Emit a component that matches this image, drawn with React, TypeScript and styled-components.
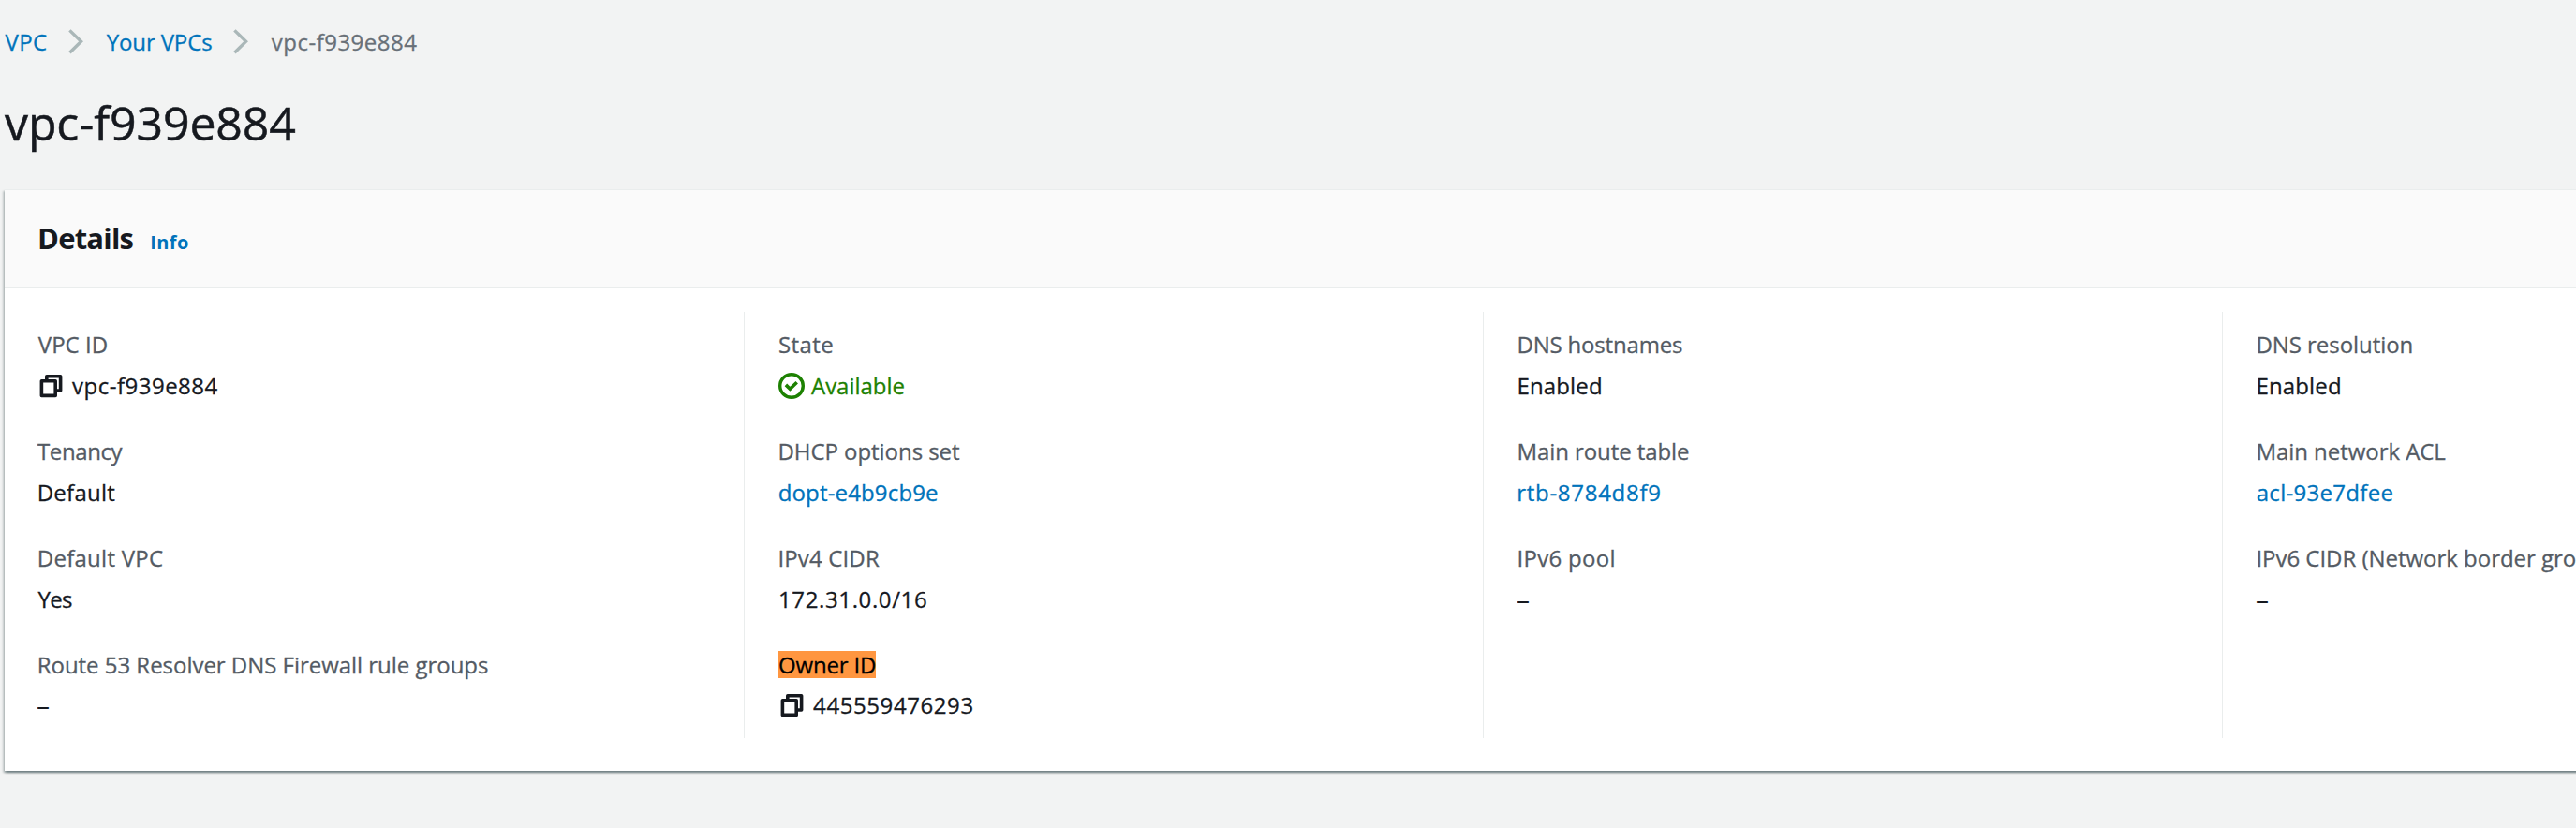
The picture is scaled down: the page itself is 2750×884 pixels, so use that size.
import React from 'react';
import styled, { createGlobalStyle } from 'styled-components';

const GlobalStyle = createGlobalStyle`
  body {
    margin: 0;
    background: #f2f3f3;
    color: #16191f;
    font-family: 'Open Sans', 'Noto Sans', sans-serif;
    font-size: 24px;
    line-height: 36px;
    -webkit-text-stroke: 0.3px currentColor;
  }
`;

const Page = styled.main`
  box-sizing: border-box;
  width: 100%;
  height: 884px;
  padding: 27px 0 0 5px;
  overflow: hidden;
  white-space: nowrap;
`;

const Breadcrumbs = styled.nav`
  display: flex;
  align-items: center;
  height: 36px;
  padding-left: 0.6px;
`;

const Crumb = styled.a<{ $current?: boolean; $spacing: number }>`
  color: ${(p) => (p.$current ? '#687078' : '#0073bb')};
  letter-spacing: ${(p) => p.$spacing}px;
`;

const ChevronIcon = styled.svg`
  flex: none;
  width: 16px;
  height: 27px;
  margin: 0 24.4px 1px 23px;
`;

const Title = styled.h1`
  margin: 38px 0 0;
  font-size: 50px;
  font-weight: 400;
  line-height: 60px;
  letter-spacing: -0.1px;
  -webkit-text-stroke-width: 0.5px;
`;

const Card = styled.section`
  width: 3156px;
  margin-top: 41px;
  background: #fff;
  border-top: 1px solid #eaeded;
  box-shadow:
    0 2px 2px 0 rgba(0, 28, 36, 0.34),
    2px 2px 2px 0 rgba(0, 28, 36, 0.16),
    -2px 2px 2px 0 rgba(0, 28, 36, 0.16);
`;

const CardHeader = styled.header`
  display: flex;
  align-items: baseline;
  box-sizing: border-box;
  height: 104px;
  padding: 31px 35px 0;
  background: #fafafa;
  border-bottom: 1px solid #eaeded;
  -webkit-text-stroke-width: 0;
`;

const CardTitle = styled.h2`
  margin: 0;
  font-size: 31px;
  font-weight: 700;
  line-height: 40px;
  letter-spacing: -0.79px;
`;

const InfoLink = styled.a`
  margin-left: 18px;
  color: #0073bb;
  font-size: 20px;
  font-weight: 700;
  letter-spacing: 0.4px;
`;

const Columns = styled.div`
  display: grid;
  grid-template-columns: repeat(4, 789px);
  padding: 26px 0 35px;
`;

const Column = styled.div`
  display: flex;
  flex-direction: column;
  gap: 34px;
  box-sizing: border-box;
  height: 455px;
  padding: 17px 0 0 36px;
  border-left: 1px solid #eaeded;

  &:first-child {
    padding-left: 35px;
    border-left: 0;
  }
`;

const Field = styled.div<{ $tight?: boolean }>`
  display: flex;
  flex-direction: column;
  align-items: flex-start;
  gap: ${(p) => (p.$tight ? 7 : 8)}px;
`;

const Label = styled.div<{ $spacing: number; $shift: number }>`
  height: 36px;
  margin-left: ${(p) => p.$shift}px;
  color: #545b64;
  letter-spacing: ${(p) => p.$spacing}px;
`;

const Mark = styled.mark`
  display: block;
  width: 104px;
  height: 29px;
  margin-top: 3px;
  background: #ff9640;
  color: #000;
  line-height: 29px;
`;

const tones = { text: '#16191f', link: '#0073bb', success: '#1d8102' };

const Value = styled.div<{ $tone: keyof typeof tones; $spacing: number; $shift: number }>`
  display: flex;
  height: 36px;
  margin-left: ${(p) => p.$shift}px;
  color: ${(p) => tones[p.$tone]};
  letter-spacing: ${(p) => p.$spacing}px;
`;

const Dash = styled.span`
  margin: -1px 0 0 -1px;
  font-size: 28px;
  -webkit-text-stroke-width: 0;
`;

const ValueIcon = styled.svg<{ $gap: number }>`
  flex: none;
  width: 28px;
  height: 28px;
  margin: 4px ${(p) => p.$gap}px 0 0;
  fill: none;
  stroke: currentColor;
`;

function Chevron() {
  return (
    <ChevronIcon viewBox="0 0 16 27" fill="none" stroke="#aab7b8" strokeWidth="3.4">
      <path d="M1.4 1.4 13.6 13.3 1.4 25.2" />
    </ChevronIcon>
  );
}

function CopyIcon() {
  return (
    <ValueIcon $gap={8.5} viewBox="0 0 28 28" strokeWidth="3.6" strokeLinejoin="round">
      <path d="M3.4 8.8h14.8v15.6H3.4z" />
      <path d="M8.8 8.8V3.8h14.8v15.2h-5.2" />
    </ValueIcon>
  );
}

function CheckIcon() {
  return (
    <ValueIcon $gap={7} viewBox="0 0 28 28" strokeWidth="3.4">
      <circle cx="14" cy="14" r="12.3" />
      <path d="M7.9 12.9 12.4 17.2 19.7 10.2" strokeWidth="3.6" />
    </ValueIcon>
  );
}

type Part = { text: string; spacing?: number; shift?: number };
type FieldData = {
  label: Part;
  value: Part & { tone?: keyof typeof tones; icon?: 'copy' | 'check' };
  highlight?: boolean;
};

const columns: FieldData[][] = [
  [
    { label: { text: 'VPC ID', spacing: 0.04, shift: 0.8 }, value: { text: 'vpc-f939e884', spacing: 0.5, shift: 0.5, icon: 'copy' } },
    { label: { text: 'Tenancy', spacing: -0.4 }, value: { text: 'Default', spacing: 0.25, shift: -0.3 } },
    { label: { text: 'Default VPC', spacing: 0.27, shift: -0.3 }, value: { text: 'Yes', spacing: -0.8, shift: 0.6 } },
    { label: { text: 'Route 53 Resolver DNS Firewall rule groups', spacing: -0.03, shift: -0.3 }, value: { text: '–' } },
  ],
  [
    { label: { text: 'State', spacing: 0.42 }, value: { text: 'Available', spacing: -0.02, tone: 'success', icon: 'check' } },
    { label: { text: 'DHCP options set', spacing: -0.05, shift: -0.6 }, value: { text: 'dopt-e4b9cb9e', spacing: 0.15, shift: -0.3, tone: 'link' } },
    { label: { text: 'IPv4 CIDR', spacing: 0.15, shift: -0.6 }, value: { text: '172.31.0.0/16', spacing: 0.62 } },
    { label: { text: 'Owner ID', spacing: -0.17 }, value: { text: '445559476293', spacing: 0.58, shift: 0.6, icon: 'copy' }, highlight: true },
  ],
  [
    { label: { text: 'DNS hostnames', spacing: -0.18, shift: -0.6 }, value: { text: 'Enabled', spacing: 0.16, shift: -0.6 } },
    { label: { text: 'Main route table', spacing: -0.08, shift: -0.6 }, value: { text: 'rtb-8784d8f9', spacing: 0.72, shift: -0.8, tone: 'link' } },
    { label: { text: 'IPv6 pool', spacing: 0.32, shift: -0.6 }, value: { text: '–' } },
  ],
  [
    { label: { text: 'DNS resolution', spacing: -0.05, shift: -0.6 }, value: { text: 'Enabled', spacing: 0.16, shift: -0.6 } },
    { label: { text: 'Main network ACL', spacing: -0.05, shift: -0.6 }, value: { text: 'acl-93e7dfee', spacing: 0.3, shift: -0.3, tone: 'link' } },
    { label: { text: 'IPv6 CIDR (Network border gro', spacing: -0.03, shift: -0.6 }, value: { text: '–' } },
  ],
];

export default function App() {
  return (
    <>
      <GlobalStyle />
      <Page>
        <Breadcrumbs>
          <Crumb $spacing={0.28}>VPC</Crumb>
          <Chevron />
          <Crumb $spacing={-0.13}>Your VPCs</Crumb>
          <Chevron />
          <Crumb $current $spacing={0.48}>vpc-f939e884</Crumb>
        </Breadcrumbs>
        <Title>vpc-f939e884</Title>
        <Card>
          <CardHeader>
            <CardTitle>Details</CardTitle>
            <InfoLink>Info</InfoLink>
          </CardHeader>
          <Columns>
            {columns.map((fields, c) => (
              <Column key={c}>
                {fields.map(({ label, value, highlight }, r) => (
                  <Field key={label.text} $tight={r === 3}>
                    <Label $spacing={label.spacing ?? 0} $shift={label.shift ?? 0}>
                      {highlight ? <Mark>{label.text}</Mark> : label.text}
                    </Label>
                    <Value $tone={value.tone ?? 'text'} $spacing={value.spacing ?? 0} $shift={value.shift ?? 0}>
                      {value.icon === 'copy' && <CopyIcon />}
                      {value.icon === 'check' && <CheckIcon />}
                      {value.text === '–' ? <Dash>–</Dash> : value.text}
                    </Value>
                  </Field>
                ))}
              </Column>
            ))}
          </Columns>
        </Card>
      </Page>
    </>
  );
}
